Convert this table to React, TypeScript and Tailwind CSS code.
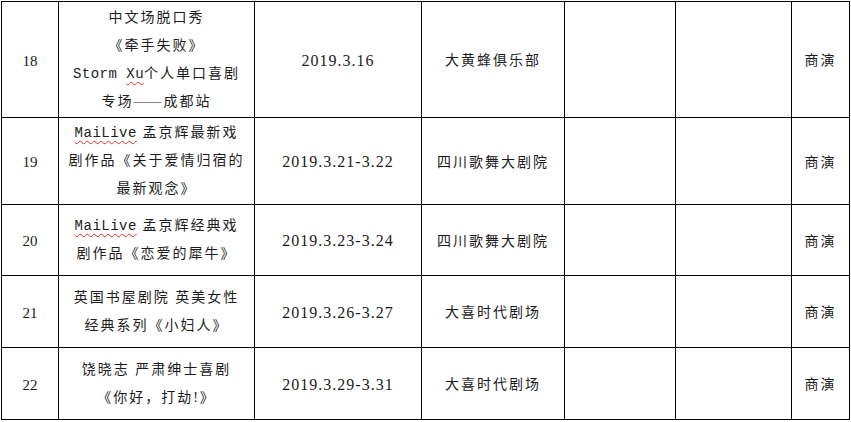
type Row = {
  no: string;
  title: React.ReactNode[];
  date: string;
  venue: string;
  kind: string;
};

function Latin({ children, wavy }: { children: React.ReactNode; wavy?: boolean }) {
  return (
    <span
      className={
        "font-['Liberation_Mono','Noto_Sans_CJK_SC',monospace] tracking-[0.5px] " +
        (wavy ? "underline decoration-wavy decoration-[#e0302a] decoration-1 underline-offset-[3px]" : "")
      }
    >
      {children}
    </span>
  );
}

const rows: Row[] = [
  {
    no: "18",
    title: [
      "中文场脱口秀",
      "《牵手失败》",
      <>
        <Latin>Storm </Latin>
        <Latin wavy>Xu</Latin>个人单口喜剧
      </>,
      <>
        专场<span className="tracking-[0px] mr-[2px]">——</span>成都站
      </>
    ],
    date: "2019.3.16",
    venue: "大黄蜂俱乐部",
    kind: "商演"
  },
  {
    no: "19",
    title: [
      <>
        <Latin wavy>MaiLive</Latin> 孟京辉最新戏
      </>,
      "剧作品《关于爱情归宿的",
      "最新观念》"
    ],
    date: "2019.3.21-3.22",
    venue: "四川歌舞大剧院",
    kind: "商演"
  },
  {
    no: "20",
    title: [
      <>
        <Latin wavy>MaiLive</Latin> 孟京辉经典戏
      </>,
      "剧作品《恋爱的犀牛》"
    ],
    date: "2019.3.23-3.24",
    venue: "四川歌舞大剧院",
    kind: "商演"
  },
  {
    no: "21",
    title: ["英国书屋剧院 英美女性", "经典系列《小妇人》"],
    date: "2019.3.26-3.27",
    venue: "大喜时代剧场",
    kind: "商演"
  },
  {
    no: "22",
    title: ["饶晓志 严肃绅士喜剧", "《你好，打劫!》"],
    date: "2019.3.29-3.31",
    venue: "大喜时代剧场",
    kind: "商演"
  }
];

const heights = ["h-[116px]", "h-[87px]", "h-[71px]", "h-[72px]", "h-[72px]"];

export default function App() {
  const cell = "border border-black text-center align-middle p-0";
  return (
    <div className="w-[851px] h-[422px] bg-white pt-px pl-px overflow-hidden">
      <table className="table-fixed border-collapse w-[848px] text-[14px] text-[#1c1c1c] font-['Liberation_Serif','Noto_Sans_CJK_SC',serif]">
        <colgroup>
          <col className="w-[57px]" />
          <col className="w-[196px]" />
          <col className="w-[167px]" />
          <col className="w-[143px]" />
          <col className="w-[111px]" />
          <col className="w-[116px]" />
          <col className="w-[58px]" />
        </colgroup>
        <tbody>
          {rows.map((r, i) => (
            <tr key={r.no} className={heights[i]}>
              <td className={cell + " text-[15px] pt-[3px]"}>{r.no}</td>
              <td className={cell + " leading-[28px] tracking-[2px] whitespace-nowrap"}>
                {r.title.map((line, j) => (
                  <div key={j}>{line}</div>
                ))}
              </td>
              <td className={cell + " text-[16px] tracking-[1px] pt-[2px]"}>{r.date}</td>
              <td className={cell + " tracking-[2px] pt-[2px]"}>{r.venue}</td>
              <td className={cell}></td>
              <td className={cell}></td>
              <td className={cell + " tracking-[2px] pt-[2px]"}>{r.kind}</td>
            </tr>
          ))}
        </tbody>
      </table>
    </div>
  );
}
